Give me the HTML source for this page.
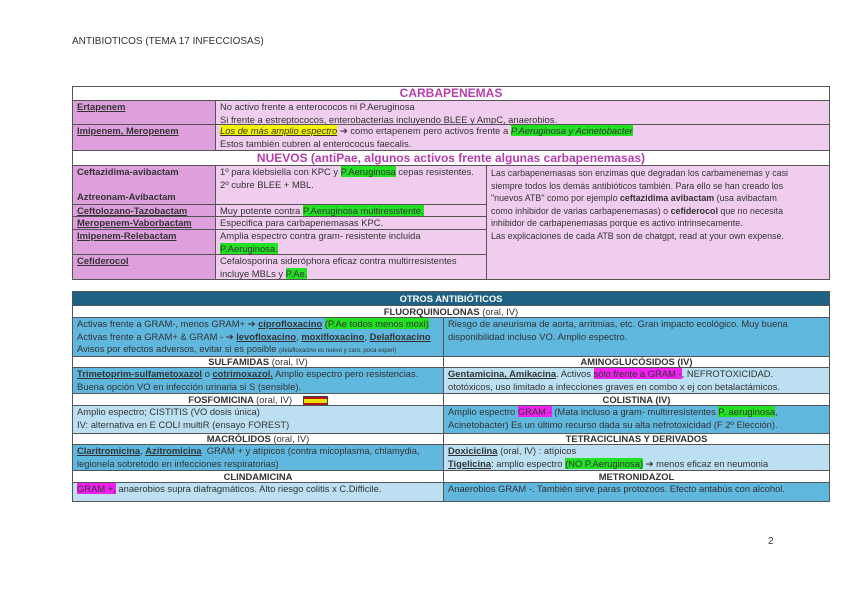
<!DOCTYPE html>
<html><head><meta charset="utf-8"><style>
body{margin:0;width:848px;height:599px;background:#fff;font-family:"Liberation Sans",sans-serif;color:#333;position:relative;overflow:hidden}
.a{position:absolute;box-sizing:border-box;font-size:9.4px;line-height:12.5px;white-space:nowrap;overflow:hidden}
.b{border:1px solid #555}
.c{text-align:center}
.L{background:#dea0dc;font-weight:bold;padding-left:4px}
.P{background:#f0cdee;padding-left:4px}
.M{background:#60b8df;padding-left:4px}
.S{background:#bce0f1;padding-left:4px}
.W{background:#fff;text-align:center;font-weight:bold}
u{text-decoration:underline}
.g{background:#22e022}.y{background:#f5f500}.m{background:#f020f0}
</style></head><body>
<div class="a" style="left:72px;top:36px;font-size:10px">ANTIBIÓTICOS (TEMA 17 INFECCIOSAS)</div>
<div class="a" style="left:768px;top:536px;font-size:10px">2</div>

<div class="a b" style="left:72px;top:86px;width:758px;height:194px;border-width:1px"></div>
<div class="a b c" style="left:72px;top:86px;width:758px;height:15px;color:#b83cb0;font-weight:bold;font-size:12px;line-height:13px">CARBAPENEMAS</div>
<div class="a b L" style="left:72px;top:100px;width:144px;height:25px"><u>Ertapenem</u></div>
<div class="a b P" style="left:215px;top:100px;width:615px;height:25px">No activo frente a enterococos ni P.Aeruginosa<br>Si frente a estreptococos, enterobacterias <u>incluyendo BLEE y AmpC</u>, anaerobios.</div>
<div class="a b L" style="left:72px;top:124px;width:144px;height:27px"><u>Imipenem, Meropenem</u></div>
<div class="a b P" style="left:215px;top:124px;width:615px;height:27px"><i class="y"><u>Los de más amplio espectro</u></i> ➔ como ertapenem pero activos frente a <i class="g">P.Aeruginosa y Acinetobacter</i><br>Estos también cubren al enterococus faecalis.</div>
<div class="a b c" style="left:72px;top:150px;width:758px;height:16px;color:#b83cb0;font-weight:bold;font-size:12px;line-height:14px">NUEVOS (antiPae, algunos activos frente algunas carbapenemasas)</div>
<div class="a b L" style="left:72px;top:165px;width:144px;height:40px">Ceftazidima-avibactam<br><br>Aztreonam-Avibactam</div>
<div class="a b P" style="left:215px;top:165px;width:272px;height:40px">1º para klebsiella con KPC y <span class="g">P.Aeruginosa</span> cepas resistentes.<br>2º cubre BLEE + MBL.</div>
<div class="a b L" style="left:72px;top:204px;width:144px;height:13px;line-height:11px"><u>Ceftolozano-Tazobactam</u></div>
<div class="a b P" style="left:215px;top:204px;width:272px;height:13px;line-height:11px">Muy potente contra <span class="g">P.Aeruginosa multiresistente.</span></div>
<div class="a b L" style="left:72px;top:216px;width:144px;height:14px;line-height:12px"><u>Meropenem-Vaborbactam</u></div>
<div class="a b P" style="left:215px;top:216px;width:272px;height:14px;line-height:12px">Especifica para carbapenemasas KPC.</div>
<div class="a b L" style="left:72px;top:229px;width:144px;height:26px"><u>Imipenem-Relebactam</u></div>
<div class="a b P" style="left:215px;top:229px;width:272px;height:26px">Amplia espectro contra gram- resistente incluida<br><span class="g">P.Aeruginosa.</span></div>
<div class="a b L" style="left:72px;top:254px;width:144px;height:26px"><u>Cefiderocol</u></div>
<div class="a b P" style="left:215px;top:254px;width:272px;height:26px">Cefalosporina sideróphora eficaz contra multirresistentes<br>incluye MBLs y <span class="g">P.Ae.</span></div>
<div class="a b P" style="left:486px;top:165px;width:344px;height:115px;font-size:8.9px;padding-top:1px">Las carbapenemasas son enzimas que degradan los carbamenemas y casi<br>siempre todos los demás antibióticos también. Para ello se han creado los<br>"nuevos ATB" como por ejemplo <b>ceftazidima avibactam</b> (usa avibactam<br>como inhibidor de varias carbapenemasas) o <b>cefiderocol</b> que no necesita<br>inhibidor de carbapenemasas porque es activo intrinsecamente.<br>Las explicaciones de cada ATB son de chatgpt, read at your own expense.</div>

<div class="a b" style="left:72px;top:291px;width:758px;height:15px;background:#1f6184;color:#fff;font-weight:bold;text-align:center;line-height:13px">OTROS ANTIBIÓTICOS</div>
<div class="a b W" style="left:72px;top:305px;width:758px;height:13px;line-height:11px">FLUORQUINOLONAS <span style="font-weight:normal">(oral, IV)</span></div>
<div class="a b M" style="left:72px;top:317px;width:372px;height:40px">Activas frente a GRAM-, menos GRAM+ ➔ <b><u>ciprofloxacino</u></b> <span class="g">(P.Ae todos menos moxi)</span><br>Activas frente a GRAM+ &amp; GRAM - ➔ <b><u>levofloxacino</u></b>, <b><u>moxifloxacino</u></b>, <b><u>Delafloxacino</u></b><br>Avisos por efectos adversos, evitar si es posible <span style="font-size:6px">(delafloxacino es nuevo y caro, poca experi)</span></div>
<div class="a b M" style="left:443px;top:317px;width:387px;height:40px">Riesgo de aneurisma de aorta, arritmias, etc. Gran impacto ecológico. Muy buena<br>disponibilidad incluso VO. Amplio espectro.</div>
<div class="a b W" style="left:72px;top:356px;width:372px;height:12px;line-height:10px">SULFAMIDAS <span style="font-weight:normal">(oral, IV)</span></div>
<div class="a b W" style="left:443px;top:356px;width:387px;height:12px;line-height:10px">AMINOGLUCÓSIDOS (IV)</div>
<div class="a b M" style="left:72px;top:367px;width:372px;height:27px"><b><u>Trimetoprim-sulfametoxazol</u></b> o <b><u>cotrimoxazol.</u></b> Amplio espectro pero resistencias.<br>Buena opción VO en infección urinaria si S (sensible).</div>
<div class="a b S" style="left:443px;top:367px;width:387px;height:27px"><b><u>Gentamicina, Amikacina</u></b>. Activos <span class="m">sólo frente a GRAM -</span>, NEFROTOXICIDAD.<br>ototóxicos, uso limitado a infecciones graves en combo x ej con betalactámicos.</div>
<div class="a b W" style="left:72px;top:393px;width:372px;height:13px;line-height:11px">FOSFOMICINA <span style="font-weight:normal">(oral, IV)</span> <span style="display:inline-block;width:23px;height:8px;vertical-align:middle;margin-left:8px;border:1px solid #444;background:linear-gradient(#b01818 0 25%,#f0e000 25% 75%,#b01818 75%)"></span></div>
<div class="a b W" style="left:443px;top:393px;width:387px;height:13px;line-height:11px">COLISTINA (IV)</div>
<div class="a b S" style="left:72px;top:405px;width:372px;height:29px">Amplio espectro; CISTITIS (VO dosis única)<br>IV: alternativa en E COLI multiR (ensayo FOREST)</div>
<div class="a b M" style="left:443px;top:405px;width:387px;height:29px">Amplio espectro <span class="m">GRAM -</span> (Mata incluso a gram- multirresistentes <span class="g">P. aeruginosa</span>,<br>Acinetobacter) Es un último recurso dada su alta nefrotoxicidad (F 2º Elección).</div>
<div class="a b W" style="left:72px;top:433px;width:372px;height:12px;line-height:10px">MACRÓLIDOS <span style="font-weight:normal">(oral, IV)</span></div>
<div class="a b W" style="left:443px;top:433px;width:387px;height:12px;line-height:10px">TETRACICLINAS Y DERIVADOS</div>
<div class="a b M" style="left:72px;top:444px;width:372px;height:27px"><b><u>Claritromicina</u></b>, <b><u>Azitromicina</u></b> &nbsp;GRAM + y atípicos (contra micoplasma, chlamydia,<br>legionela sobretodo en infecciones respiratorias)</div>
<div class="a b S" style="left:443px;top:444px;width:387px;height:27px"><b><u>Doxiciclina</u></b> (oral, IV) : atípicos<br><b><u>Tigelicina</u></b>: amplio espectro <span class="g">(NO P.Aeruginosa)</span> ➔ menos eficaz en neumonia</div>
<div class="a b W" style="left:72px;top:470px;width:372px;height:13px;line-height:11px">CLINDAMICINA</div>
<div class="a b W" style="left:443px;top:470px;width:387px;height:13px;line-height:11px">METRONIDAZOL</div>
<div class="a b S" style="left:72px;top:482px;width:372px;height:20px"><span class="m">GRAM +,</span> anaerobios supra diafragmáticos. Alto riesgo colitis x C.Difficile.</div>
<div class="a b M" style="left:443px;top:482px;width:387px;height:20px">Anaerobios GRAM -. También sirve paras protozoos. Efecto antabús con alcohol.</div>
</body></html>
